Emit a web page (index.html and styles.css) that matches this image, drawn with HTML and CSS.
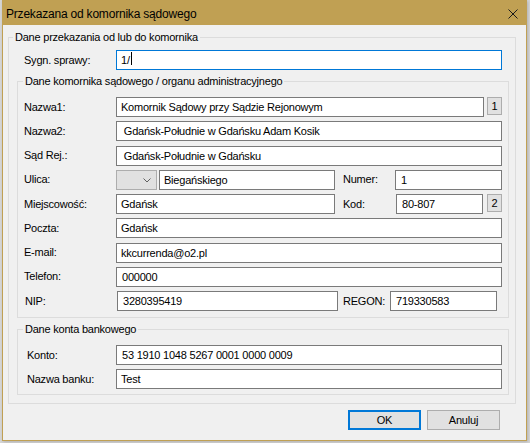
FILE: index.html
```html
<!DOCTYPE html>
<html lang="pl">
<head>
<meta charset="utf-8">
<title>Przekazana od komornika sądowego</title>
<link rel="stylesheet" href="styles.css">
</head>
<body>
<div class="window">
  <div class="titlebar">
    <span class="title">Przekazana od komornika sądowego</span>
    <span class="close"><svg width="10" height="10" viewBox="0 0 10 10"><path d="M0.5 0.5L9.5 9.5M9.5 0.5L0.5 9.5" stroke="#1a1a1a" stroke-width="1" fill="none"/></svg></span>
  </div>
  <div class="client">
    <fieldset class="group outer">
      <legend>Dane przekazania od lub do komornika</legend>
      <div class="row row-sygn">
        <label class="lbl">Sygn. sprawy:</label>
        <span class="tb focus w-full">1/<span class="caret"></span></span>
      </div>

      <fieldset class="group nested inner">
        <legend>Dane komornika sądowego / organu administracyjnego</legend>
        <div class="rows rows-inner">
          <div class="row">
            <label class="lbl">Nazwa1:</label>
            <span class="tb w-n1">Komornik Sądowy przy Sądzie Rejonowym</span>
            <span class="mini gap3">1</span>
          </div>
          <div class="row">
            <label class="lbl">Nazwa2:</label>
            <span class="tb w-full">&nbsp;Gdańsk-Południe w Gdańsku Adam Kosik</span>
          </div>
          <div class="row">
            <label class="lbl">Sąd Rej.:</label>
            <span class="tb w-full">&nbsp;Gdańsk-Południe w Gdańsku</span>
          </div>
          <div class="row">
            <label class="lbl">Ulica:</label>
            <span class="combo"><svg width="8" height="5" viewBox="0 0 8 5"><path d="M0.5 0.5L4 4L7.5 0.5" stroke="#606060" stroke-width="1" fill="none"/></svg></span>
            <span class="tb w-street">Biegańskiego</span>
            <label class="lbl lbl-side w-numer">Numer:</label>
            <span class="tb num w-short">1</span>
          </div>
          <div class="row">
            <label class="lbl">Miejscowość:</label>
            <span class="tb w-city">Gdańsk</span>
            <label class="lbl lbl-side w-kod">Kod:</label>
            <span class="tb num w-kodin">80-807</span>
            <span class="mini gap4">2</span>
          </div>
          <div class="row">
            <label class="lbl">Poczta:</label>
            <span class="tb w-full">Gdańsk</span>
          </div>
          <div class="row">
            <label class="lbl">E-mail:</label>
            <span class="tb w-full">kkcurrenda@o2.pl</span>
          </div>
          <div class="row">
            <label class="lbl">Telefon:</label>
            <span class="tb num w-full">000000</span>
          </div>
          <div class="row row-nip">
            <label class="lbl">NIP:</label>
            <span class="tb num w-nip">3280395419</span>
            <label class="lbl lbl-regon w-regon">REGON:</label>
            <span class="tb num w-short">719330583</span>
          </div>
        </div>
      </fieldset>

      <fieldset class="group nested bank">
        <legend>Dane konta bankowego</legend>
        <div class="rows rows-bank">
          <div class="row">
            <label class="lbl lbl-bank">Konto:</label>
            <span class="tb num w-full">53 1910 1048 5267 0001 0000 0009</span>
          </div>
          <div class="row">
            <label class="lbl lbl-bank">Nazwa banku:</label>
            <span class="tb w-full">Test</span>
          </div>
        </div>
      </fieldset>
    </fieldset>

    <div class="actions">
      <button class="btn btn-default" type="button">OK</button>
      <button class="btn" type="button">Anuluj</button>
    </div>
  </div>
</div>
</body>
</html>
```

FILE: styles.css
```css
* {
  box-sizing: border-box;
}

html,
body {
  margin: 0;
}

body {
  width: 530px;
  height: 443px;
  overflow: hidden;
  padding-left: 2px;
  background: #d6d6d6;
  font-family: "Liberation Sans", Arial, sans-serif;
  font-size: 11px;
  letter-spacing: -0.22px;
  color: #000;
}

.window {
  width: 525px;
  height: 441px;
  display: flex;
  flex-direction: column;
  background: #f0f0f0;
  border: 1px solid #c0a053;
  border-top: 0;
  box-shadow: 1px 1px 3px rgba(0, 0, 0, 0.18);
}

.titlebar {
  flex: none;
  height: 25px;
  display: flex;
  align-items: center;
  justify-content: space-between;
  padding: 2px 9px 0 4px;
  margin: 0 -1px;
  background: #c0a053;
  font-size: 12px;
  letter-spacing: -0.2px;
  color: #000;
}

.close {
  display: flex;
  width: 10px;
  height: 10px;
}

.client {
  flex: 1;
  padding: 6px 10px 0 5px;
}

fieldset.group {
  margin: 0;
  padding: 0;
  min-width: 0;
  border: 1px solid #dcdcdc;
}

fieldset.group legend {
  margin-left: 4px;
  padding: 0 2px;
  line-height: 13px;
  font-size: 11px;
}

fieldset.nested legend {
  margin-left: 5px;
}

.outer {
  width: 508px;
  padding: 6px 0 8px 0 !important;
}

.nested {
  width: 492px;
  margin: 5px 0 0 8px !important;
}

.inner {
  padding: 9px 0 6px 0 !important;
}

.bank {
  padding: 9px 0 5px 0 !important;
}

.rows {
  display: flex;
  flex-direction: column;
}

.rows-inner {
  row-gap: 4.25px;
  padding-left: 6px;
}

.rows-bank {
  row-gap: 4px;
  padding-left: 9px;
}

.row {
  display: flex;
  align-items: center;
  height: 20px;
}

.row-sygn {
  padding-left: 15px;
}

.row-nip {
  padding-left: 1px;
}

.lbl {
  flex: none;
  width: 92px;
  line-height: 13px;
  white-space: nowrap;
}

.lbl-bank {
  width: 89px;
}

.lbl-side {
  margin-left: 8px;
}

.lbl-regon {
  margin-left: 5px;
}

.w-numer {
  width: 52px;
}

.w-kod {
  width: 53px;
}

.w-regon {
  width: 47px;
}

.tb {
  flex: none;
  height: 20px;
  padding: 0 4px;
  border: 1px solid #7a7a7a;
  background: #fff;
  line-height: 18px;
  white-space: nowrap;
  overflow: hidden;
}

.tb.num {
  padding-left: 5px;
}

.tb.focus {
  border-color: #0078d7;
}

.caret {
  display: inline-block;
  width: 1px;
  height: 13px;
  margin-left: 1px;
  background: #000;
  vertical-align: -1px;
}

.w-full {
  width: 386px;
}

.w-n1 {
  width: 368px;
}

.w-street {
  width: 176px;
  margin-left: 2px;
}

.w-short {
  width: 107px;
}

.w-city {
  width: 219px;
}

.w-kodin {
  width: 87px;
}

.w-nip {
  width: 221px;
}

.combo {
  flex: none;
  width: 41px;
  height: 20px;
  display: flex;
  align-items: center;
  justify-content: flex-end;
  padding: 1px 5px 0 0;
  border: 1px solid #adadad;
  background: #e1e1e1;
}

.mini {
  flex: none;
  align-self: flex-start;
  width: 15px;
  height: 18px;
  display: flex;
  align-items: center;
  justify-content: center;
  border: 1px solid #adadad;
  background: #e1e1e1;
  line-height: 13px;
}

.gap3 {
  margin-left: 3px;
}

.gap4 {
  margin-left: 4px;
}

.actions {
  display: flex;
  justify-content: flex-end;
  gap: 6px;
  margin-top: 6px;
  padding-right: 16px;
}

.btn {
  width: 73px;
  height: 20px;
  margin: 0;
  padding: 0;
  border: 1px solid #adadad;
  border-radius: 0;
  background: #e1e1e1;
  font-family: inherit;
  font-size: 11px;
  letter-spacing: -0.22px;
  color: #000;
  line-height: 13px;
}

.btn-default {
  border: 2px solid #0078d7;
}
```
